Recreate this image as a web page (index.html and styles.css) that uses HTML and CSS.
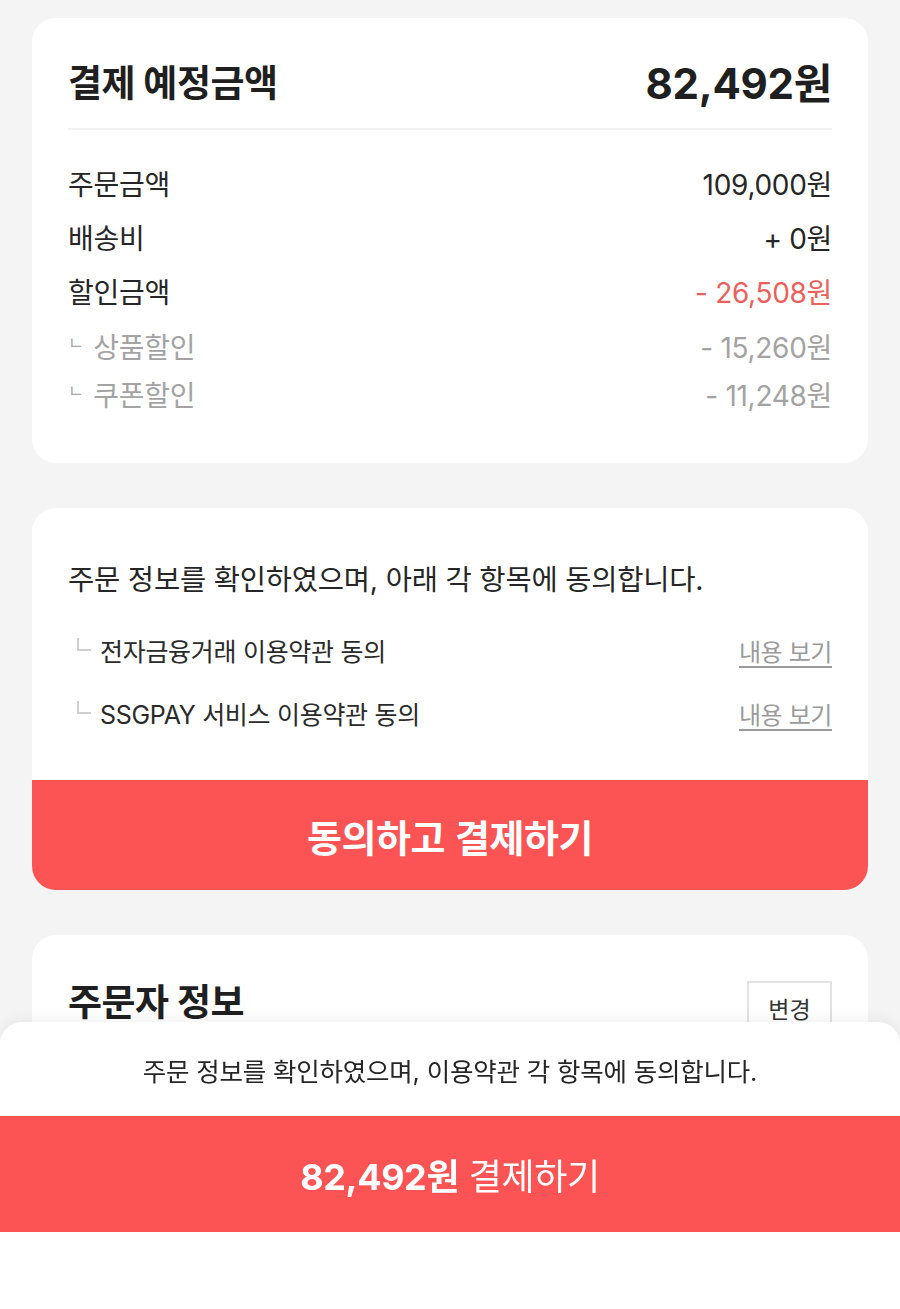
FILE: index.html
```html
<!DOCTYPE html>
<html lang="ko">
<head>
<meta charset="utf-8">
<link rel="stylesheet" href="styles.css">
</head>
<body>
<main class="page">
  <section class="card summary">
    <div class="summary-head">
      <h2 class="title">결제 예정금액</h2>
      <div class="total">82,492원</div>
    </div>
    <div class="rows">
      <div class="row"><span>주문금액</span><span>109,000원</span></div>
      <div class="row"><span>배송비</span><span>+ 0원</span></div>
      <div class="row"><span>할인금액</span><span class="minus">- 26,508원</span></div>
      <div class="row sub"><span><span class="hook">ㄴ</span>상품할인</span><span>- 15,260원</span></div>
      <div class="row sub last"><span><span class="hook">ㄴ</span>쿠폰할인</span><span>- 11,248원</span></div>
    </div>
  </section>

  <section class="card agree">
    <div class="agree-body">
      <p class="agree-lead">주문 정보를 확인하였으며, 아래 각 항목에 동의합니다.</p>
      <div class="terms">
        <div class="term"><span class="term-name"><i class="corner"></i>전자금융거래 이용약관 동의</span><a class="view">내용 보기</a></div>
        <div class="term"><span class="term-name"><i class="corner"></i>SSGPAY 서비스 이용약관 동의</span><a class="view">내용 보기</a></div>
      </div>
    </div>
    <button class="agree-btn">동의하고 결제하기</button>
  </section>

  <section class="card orderer">
    <div class="orderer-head">
      <h2 class="title">주문자 정보</h2>
      <button class="change">변경</button>
    </div>
  </section>
</main>

<div class="sheet">
  <p class="sheet-text">주문 정보를 확인하였으며, 이용약관 각 항목에 동의합니다.</p>
  <button class="pay-btn"><b>82,492원</b> 결제하기</button>
</div>
</body>
</html>
```

FILE: styles.css
```css
* { box-sizing: border-box; margin: 0; padding: 0; }

html, body {
  background: #f4f4f4;
}

body {
  font-family: "Inter", "Noto Sans CJK KR", sans-serif;
  color: #222;
  overflow: hidden;
  height: 1309px;
}

.page {
  padding: 18px 32px 0;
  display: flex;
  flex-direction: column;
  gap: 45px;
}

.card {
  background: #fff;
  border-radius: 24px;
  overflow: hidden;
}

.summary { padding: 0 36px 49px; }

.summary-head {
  display: flex;
  justify-content: space-between;
  align-items: center;
  height: 112px;
  padding-top: 42px;
  padding-bottom: 20px;
  border-bottom: 2px solid #f3f3f3;
}

.title {
  font-size: 37px;
  font-weight: 700;
  letter-spacing: -0.5px;
  line-height: 50px;
  color: #1f1f1f;
}

.total {
  font-size: 42px;
  font-weight: 700;
  letter-spacing: -0.3px;
  line-height: 50px;
  color: #1f1f1f;
}

.rows { padding-top: 26px; }

.row {
  display: flex;
  justify-content: space-between;
  align-items: center;
  height: 54px;
  font-size: 28px;
  color: #262626;
  letter-spacing: -0.3px;
}

.row.sub {
  height: 56px;
  color: #a3a3a3;
}
.row.sub.last { height: 40px; }

.minus { color: #ec5f5c; }

.hook {
  font-size: 17px;
  position: relative;
  top: -9px;
  margin-right: 10px;
  color: #a8a8a8;
}

.agree-body { padding: 52px 36px 47px; }

.agree-lead {
  font-size: 28.5px;
  line-height: 40px;
  letter-spacing: -0.2px;
  color: #262626;
}

.terms {
  margin-top: 30px;
  display: flex;
  flex-direction: column;
  gap: 23px;
}

.term {
  display: flex;
  justify-content: space-between;
  align-items: center;
  height: 40px;
}

.term-name {
  display: flex;
  align-items: center;
  font-size: 25px;
  letter-spacing: -0.3px;
  color: #2a2a2a;
}

.corner {
  display: inline-block;
  width: 14px;
  height: 13px;
  border-left: 2px solid #cfcfcf;
  border-bottom: 2px solid #cfcfcf;
  margin: 0 9px 0 9px;
  position: relative;
  top: -6px;
}

.view {
  font-size: 24px;
  color: #9a9a9a;
  text-decoration: underline;
  text-underline-offset: 5px;
  text-decoration-thickness: 2px;
  letter-spacing: -0.4px;
}

.agree-btn {
  display: block;
  width: 100%;
  height: 110px;
  border: 0;
  background: #fc5454;
  color: #fff;
  font-family: "Noto Sans CJK KR", sans-serif;
  font-size: 38px;
  font-weight: 700;
  letter-spacing: -0.5px;
}

.orderer {
  height: 500px;
  padding: 0 36px;
}

.orderer-head {
  display: flex;
  justify-content: space-between;
  align-items: flex-start;
  padding-top: 43px;
}

.change {
  margin-top: 3px;
  width: 85px;
  height: 60px;
  border: 2px solid #e2e2e2;
  background: #fff;
  font-family: "Noto Sans CJK KR", sans-serif;
  font-size: 23px;
  color: #333;
  padding-bottom: 6px;
}

.sheet {
  position: fixed;
  left: 0;
  right: 0;
  top: 1022px;
  height: 287px;
  background: #fff;
  border-radius: 22px 22px 0 0;
  box-shadow: 0 -4px 14px rgba(0, 0, 0, 0.05);
  padding-top: 33px;
}

.sheet-text {
  text-align: center;
  font-size: 25.5px;
  line-height: 34px;
  letter-spacing: -0.2px;
  color: #262626;
}

.pay-btn {
  display: block;
  width: 100%;
  height: 116px;
  margin-top: 27px;
  border: 0;
  background: #fc5454;
  color: #fff;
  font-family: "Inter", "Noto Sans CJK KR", sans-serif;
  font-size: 36px;
  font-weight: 400;
  letter-spacing: -0.4px;
}

.pay-btn b { font-weight: 700; }
```
